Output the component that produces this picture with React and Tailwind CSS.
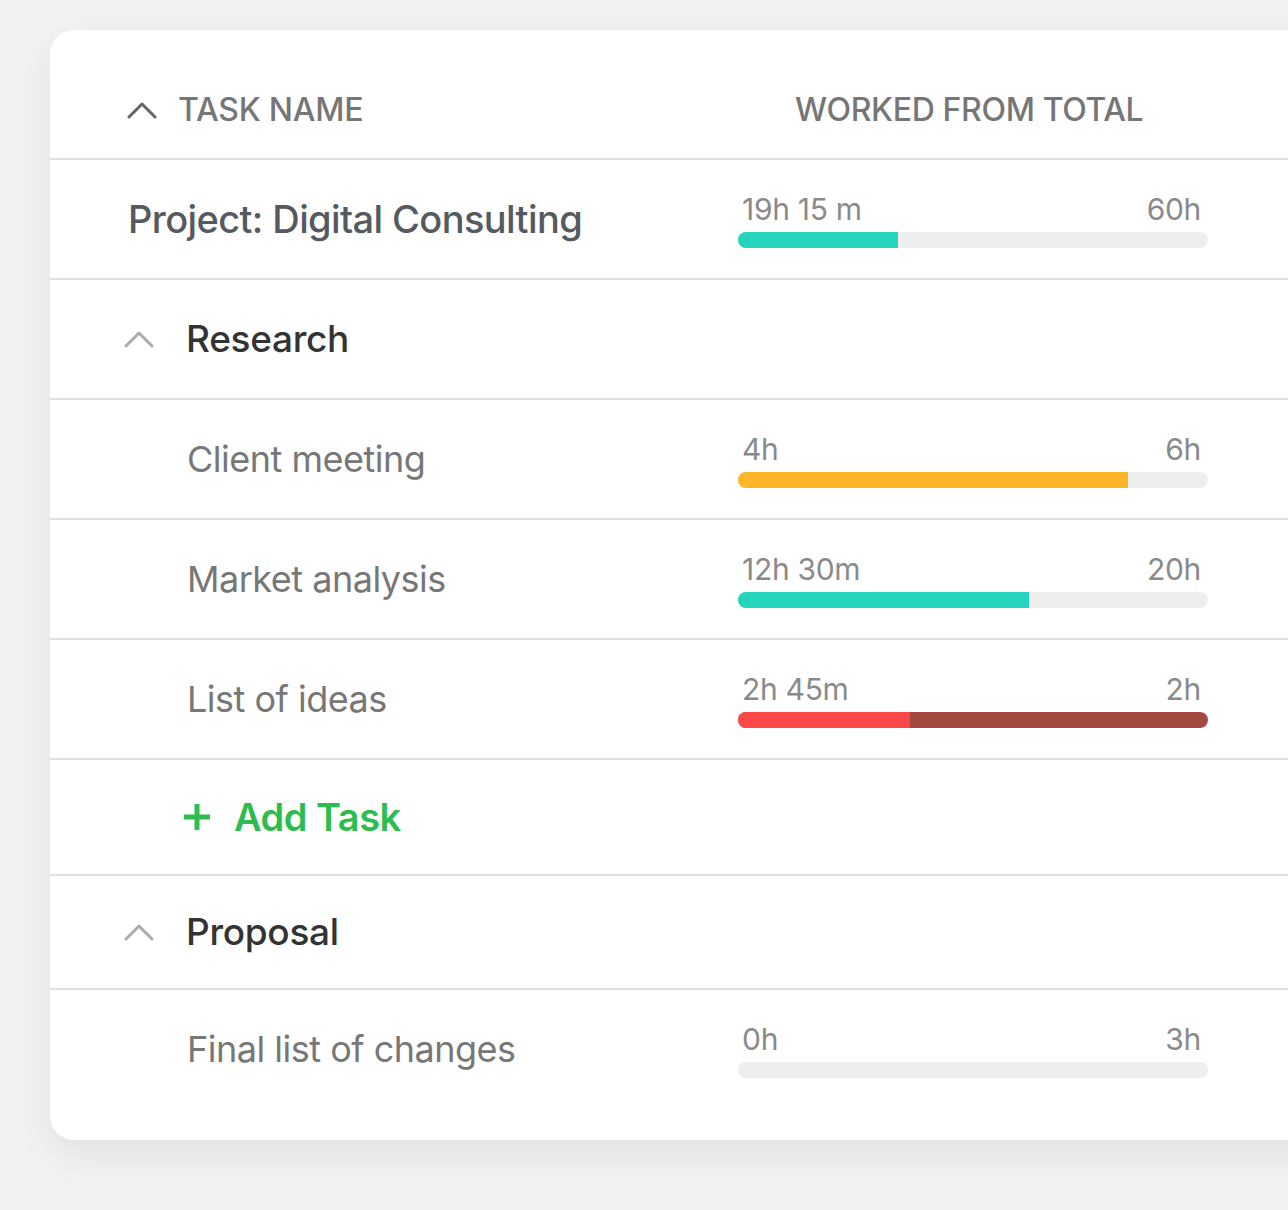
import React from "react";

const tasks = {
  project: { worked: "19h 15 m", total: "60h", pct: 34, color: "bg-[#26d3bd]" },
};

function Chevron({ className }) {
  return (
    <svg width="30" height="18" viewBox="0 0 30 18" fill="none" className={className}>
      <polyline points="2,16 15,3 28,16" stroke="currentColor" strokeWidth="3" strokeLinecap="round" strokeLinejoin="round" />
    </svg>
  );
}

function Progress({ worked, total, pct, color, over }) {
  return (
    <div className="w-[470px] mt-[4px]">
      <div className="flex justify-between pl-[4px] pr-[7px] text-[30px] leading-[30px] text-[#8a8a8a] tracking-[-0.3px]">
        <span>{worked}</span>
        <span>{total}</span>
      </div>
      <div className={`mt-[8px] h-[16px] rounded-full overflow-hidden flex ${over ? "bg-[#a34a40]" : "bg-[#eeeeee]"}`}>
        <div className={`h-full ${color}`} style={{ width: `${pct}%` }} />
      </div>
    </div>
  );
}

function TaskRow({ name, tall, last, ...bar }) {
  return (
    <div className={`${tall ? "h-[150px]" : "h-[120px]"} ${last ? "" : "border-b-2 border-[#e0e0e0]"}`}>
      <div className="h-[118px] flex items-center">
        <div className="w-[688px] shrink-0 pl-[137px] text-[36px] text-[#777777] tracking-[-0.5px]">{name}</div>
        <Progress {...bar} />
      </div>
    </div>
  );
}

function GroupRow({ name, h }) {
  return (
    <div className={`${h} border-b-2 border-[#e0e0e0] flex items-center pl-[74px]`}>
      <Chevron className="text-[#ababab]" />
      <span className="ml-[32px] text-[37px] font-medium text-[#333333] tracking-[-0.3px]">{name}</span>
    </div>
  );
}

export default function App() {
  return (
    <div className="w-[1288px] h-[1210px] overflow-hidden bg-[#f2f2f2] pt-[30px] pl-[50px] font-['Inter',sans-serif]">
      <div className="w-[1300px] rounded-[24px] bg-white shadow-[0_14px_40px_rgba(0,0,0,0.07)]">
        {/* header */}
        <div className="h-[130px] border-b-2 border-[#e0e0e0] flex items-center pt-[32px]">
          <div className="w-[688px] shrink-0 pl-[77px] flex items-center">
            <Chevron className="text-[#666666]" />
            <span className="ml-[21px] text-[32px] font-medium text-[#767676] tracking-[-0.2px]">TASK NAME</span>
          </div>
          <div className="pl-[57px] text-[32px] font-medium text-[#767676] tracking-[-0.35px]">WORKED FROM TOTAL</div>
        </div>

        {/* project */}
        <div className="h-[120px] border-b-2 border-[#e0e0e0] flex items-center">
          <div className="w-[688px] shrink-0 pl-[78px] text-[38px] font-medium text-[#555a60] tracking-[-0.6px]">
            Project: Digital Consulting
          </div>
          <Progress {...tasks.project} />
        </div>

        <GroupRow name="Research" h="h-[120px]" />
        <TaskRow name="Client meeting" worked="4h" total="6h" pct={83} color="bg-[#fdb52a]" />
        <TaskRow name="Market analysis" worked="12h 30m" total="20h" pct={62} color="bg-[#26d3bd]" />
        <TaskRow name="List of ideas" worked="2h 45m" total="2h" pct={36.6} color="bg-[#fb4848]" over />

        {/* add task */}
        <div className="h-[116px] border-b-2 border-[#e0e0e0] flex items-center pl-[133px]">
          <svg width="28" height="28" viewBox="0 0 28 28" className="text-[#2dbd4e]">
            <path d="M14 1v26M1 14h26" stroke="currentColor" strokeWidth="5" />
          </svg>
          <span className="ml-[23px] text-[38px] font-semibold text-[#2dbd4e] tracking-[-0.5px]">Add Task</span>
        </div>

        <GroupRow name="Proposal" h="h-[114px]" />
        <TaskRow name="Final list of changes" worked="0h" total="3h" pct={0} color="bg-[#26d3bd]" tall last />
      </div>
    </div>
  );
}
